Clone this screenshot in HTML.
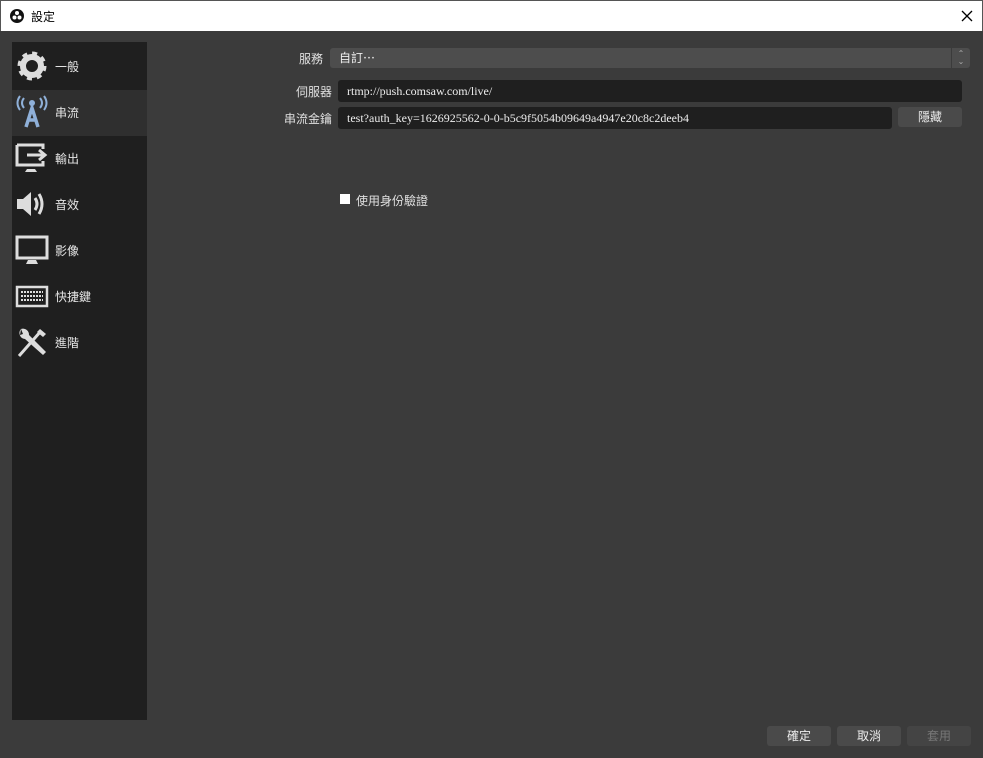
<!DOCTYPE html><html><head><meta charset="utf-8"><style>
*{margin:0;padding:0;box-sizing:border-box}
body{width:983px;height:758px;background:#3b3b3b;font-family:"Liberation Sans","Noto Sans CJK TC",sans-serif;font-size:12px;color:#ddd;position:relative;overflow:hidden}
.title{position:absolute;left:0;top:0;width:983px;height:31px;background:#fff;border:1px solid #555;border-bottom:none;color:#000}
.title span{position:absolute;left:30px;top:7px;font-size:12px}
.side{position:absolute;left:12px;top:42px;width:135px;height:678px;background:#1f1f1f}
.item{position:absolute;left:0;width:135px;height:46px}
.item.sel{background:#2f2f2f}
.item svg{position:absolute;left:3px;top:5px}
.item span{position:absolute;left:43px;top:14px;color:#e6e6e6}
.lab{position:absolute;color:#e0e0e0;text-align:right;width:80px}
.inp{position:absolute;background:#1f1f1f;border-radius:3px;color:#eee;font-family:"Liberation Serif",serif;font-size:12px;padding:4px 9px;height:22px}
.btn{position:absolute;background:#4a4a4a;border-radius:3px;text-align:center;height:20px;line-height:20px;color:#eee}
</style></head><body>
<div class="title">
<svg style="position:absolute;left:9px;top:8px" width="14" height="14" viewBox="0 0 14 14"><circle cx="7" cy="7" r="7" fill="#111"/><circle cx="7" cy="4" r="2" fill="#fff"/><circle cx="4.5" cy="8.5" r="2" fill="#fff"/><circle cx="9.5" cy="8.5" r="2" fill="#fff"/></svg>
<span>設定</span>
<svg style="position:absolute;left:960px;top:9px" width="12" height="12" viewBox="0 0 12 12"><path d="M1 1L11 11M11 1L1 11" stroke="#000" stroke-width="1.3"/></svg>
</div>
<div class="side">
<div class="item" style="top:2px"><svg width="34" height="34" viewBox="0 0 34 34"><circle cx="17" cy="17" r="11" fill="none" stroke="#ddd" stroke-width="7" stroke-dasharray="4.3 4.3"/><circle cx="17" cy="17" r="9" fill="none" stroke="#ddd" stroke-width="6"/></svg><span>一般</span></div>
<div class="item sel" style="top:48px"><svg width="34" height="34" viewBox="0 0 34 34"><circle cx="17" cy="8" r="3" fill="#8fb0d8"/><path d="M9 3Q5 8 9 13M25 3Q29 8 25 13M5 1Q0 8 5 15M29 1Q34 8 29 15" stroke="#8fb0d8" stroke-width="2" fill="none"/><path d="M11 32L17 13L23 32M13 25H21" stroke="#8fb0d8" stroke-width="3.5" fill="none"/></svg><span>串流</span></div>
<div class="item" style="top:94px"><svg width="34" height="34" viewBox="0 0 34 34"><path d="M2 4H28V8M28 20V24H2V4" stroke="#ddd" stroke-width="3" fill="none"/><path d="M12 28H20L22 31H10Z" fill="#ddd"/><path d="M12 14H28M24 9L30 14L24 19" stroke="#ddd" stroke-width="3" fill="none"/></svg><span>輸出</span></div>
<div class="item" style="top:140px"><svg width="34" height="34" viewBox="0 0 34 34"><path d="M2 12H8L16 5V29L8 22H2Z" fill="#ddd"/><path d="M20 11Q24 17 20 23M24 7Q30 17 24 27" stroke="#ddd" stroke-width="3" fill="none"/></svg><span>音效</span></div>
<div class="item" style="top:186px"><svg width="34" height="34" viewBox="0 0 34 34"><rect x="2" y="4" width="30" height="21" fill="none" stroke="#ddd" stroke-width="3"/><path d="M13 27H21L23 31H11Z" fill="#ddd"/></svg><span>影像</span></div>
<div class="item" style="top:232px"><svg width="34" height="34" viewBox="0 0 34 34"><rect x="2" y="8" width="30" height="19" fill="none" stroke="#ddd" stroke-width="2.5"/><path d="M6 13H28M6 17H28M6 21H28" stroke="#ddd" stroke-width="2" stroke-dasharray="2 1"/></svg><span>快捷鍵</span></div>
<div class="item" style="top:278px"><svg width="34" height="34" viewBox="0 0 34 34"><path d="M4 31L26 6" stroke="#ddd" stroke-width="3"/><path d="M25 4L31 9L28 12L22 7Z" fill="#ddd"/><path d="M6 4A6 6 0 0 0 10 14L28 30L31 27L14 10A6 6 0 0 0 6 4L8 9L5 10Z" fill="#ddd"/></svg><span>進階</span></div>
</div>
<div class="lab" style="left:243px;top:50px">服務</div>
<div class="btn" style="left:330px;top:48px;width:640px;height:20px;text-align:left;padding-left:9px;background:#4d4d4d">自訂⋯</div>
<div style="position:absolute;left:951px;top:48px;width:19px;height:20px;border-left:1px solid #3b3b3b;color:#aaa;font-size:8px;line-height:8px;text-align:center;padding-top:2px">⌃<br>⌄</div>
<div class="lab" style="left:252px;top:83px">伺服器</div>
<div class="inp" style="left:338px;top:80px;width:624px">rtmp://push.comsaw.com/live/</div>
<div class="lab" style="left:252px;top:110px">串流金鑰</div>
<div class="inp" style="left:338px;top:107px;width:554px">test?auth_key=1626925562-0-0-b5c9f5054b09649a4947e20c8c2deeb4</div>
<div class="btn" style="left:898px;top:107px;width:64px">隱藏</div>
<div style="position:absolute;left:340px;top:194px;width:10px;height:10px;background:#fff"></div>
<div style="position:absolute;left:356px;top:192px;color:#e0e0e0">使用身份驗證</div>
<div class="btn" style="left:767px;top:726px;width:64px">確定</div>
<div class="btn" style="left:837px;top:726px;width:64px">取消</div>
<div class="btn" style="left:907px;top:726px;width:64px;background:#444;color:#777">套用</div>
</body></html>
